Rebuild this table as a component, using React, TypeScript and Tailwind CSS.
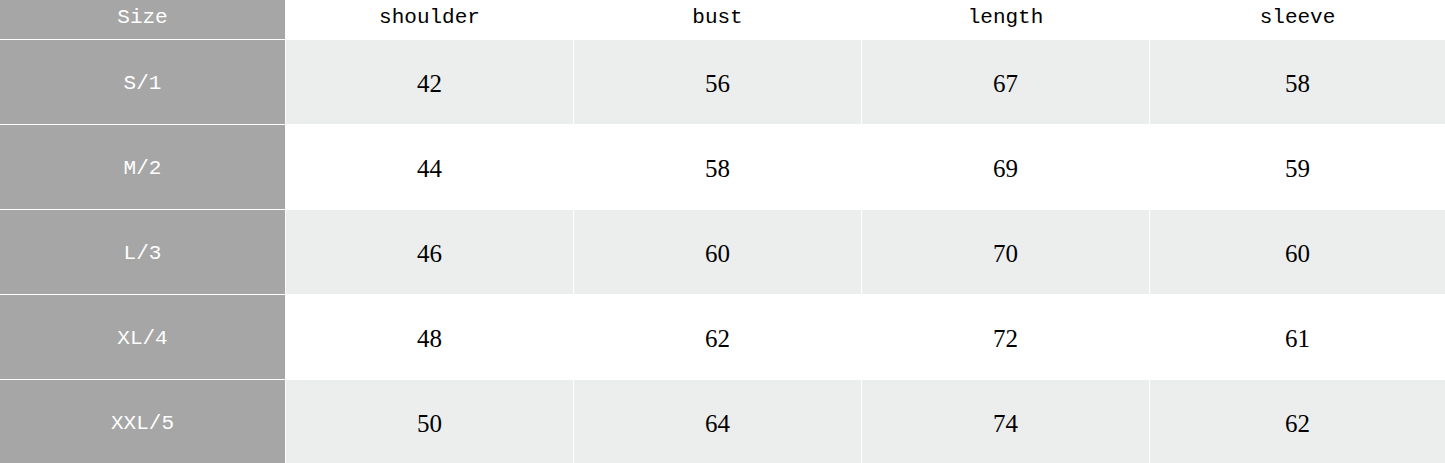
import React from "react";

const rows = [
  ["S/1", "42", "56", "67", "58"],
  ["M/2", "44", "58", "69", "59"],
  ["L/3", "46", "60", "70", "60"],
  ["XL/4", "48", "62", "72", "61"],
  ["XXL/5", "50", "64", "74", "62"],
];

const headers = ["shoulder", "bust", "length", "sleeve"];

export default function App() {
  return (
    <div className="w-[1445px] h-[463px] overflow-hidden bg-white">
      <div className="grid grid-cols-[285px_287px_287px_287px_1fr] grid-rows-[39px_84px_84px_84px_84px_84px] gap-px bg-white">
        <div className="bg-[#a6a6a6] text-white flex items-center justify-center pb-[4px] text-[21px] font-['Liberation_Mono',monospace]">
          Size
        </div>
        {headers.map((h) => (
          <div
            key={h}
            className="bg-white text-black flex items-center justify-center pb-[4px] text-[21px] font-['Liberation_Mono',monospace]"
          >
            {h}
          </div>
        ))}
        {rows.map((r, i) => (
          <React.Fragment key={r[0]}>
            <div className="bg-[#a6a6a6] text-white flex items-center justify-center pt-[3px] text-[21px] font-['Liberation_Mono',monospace]">
              {r[0]}
            </div>
            {r.slice(1).map((v, j) => (
              <div
                key={j}
                className={`${i % 2 === 0 ? "bg-[#eceeed]" : "bg-white"} text-black flex items-center justify-center pt-[4px] text-[25px] font-['Liberation_Serif',serif]`}
              >
                {v}
              </div>
            ))}
          </React.Fragment>
        ))}
      </div>
    </div>
  );
}
